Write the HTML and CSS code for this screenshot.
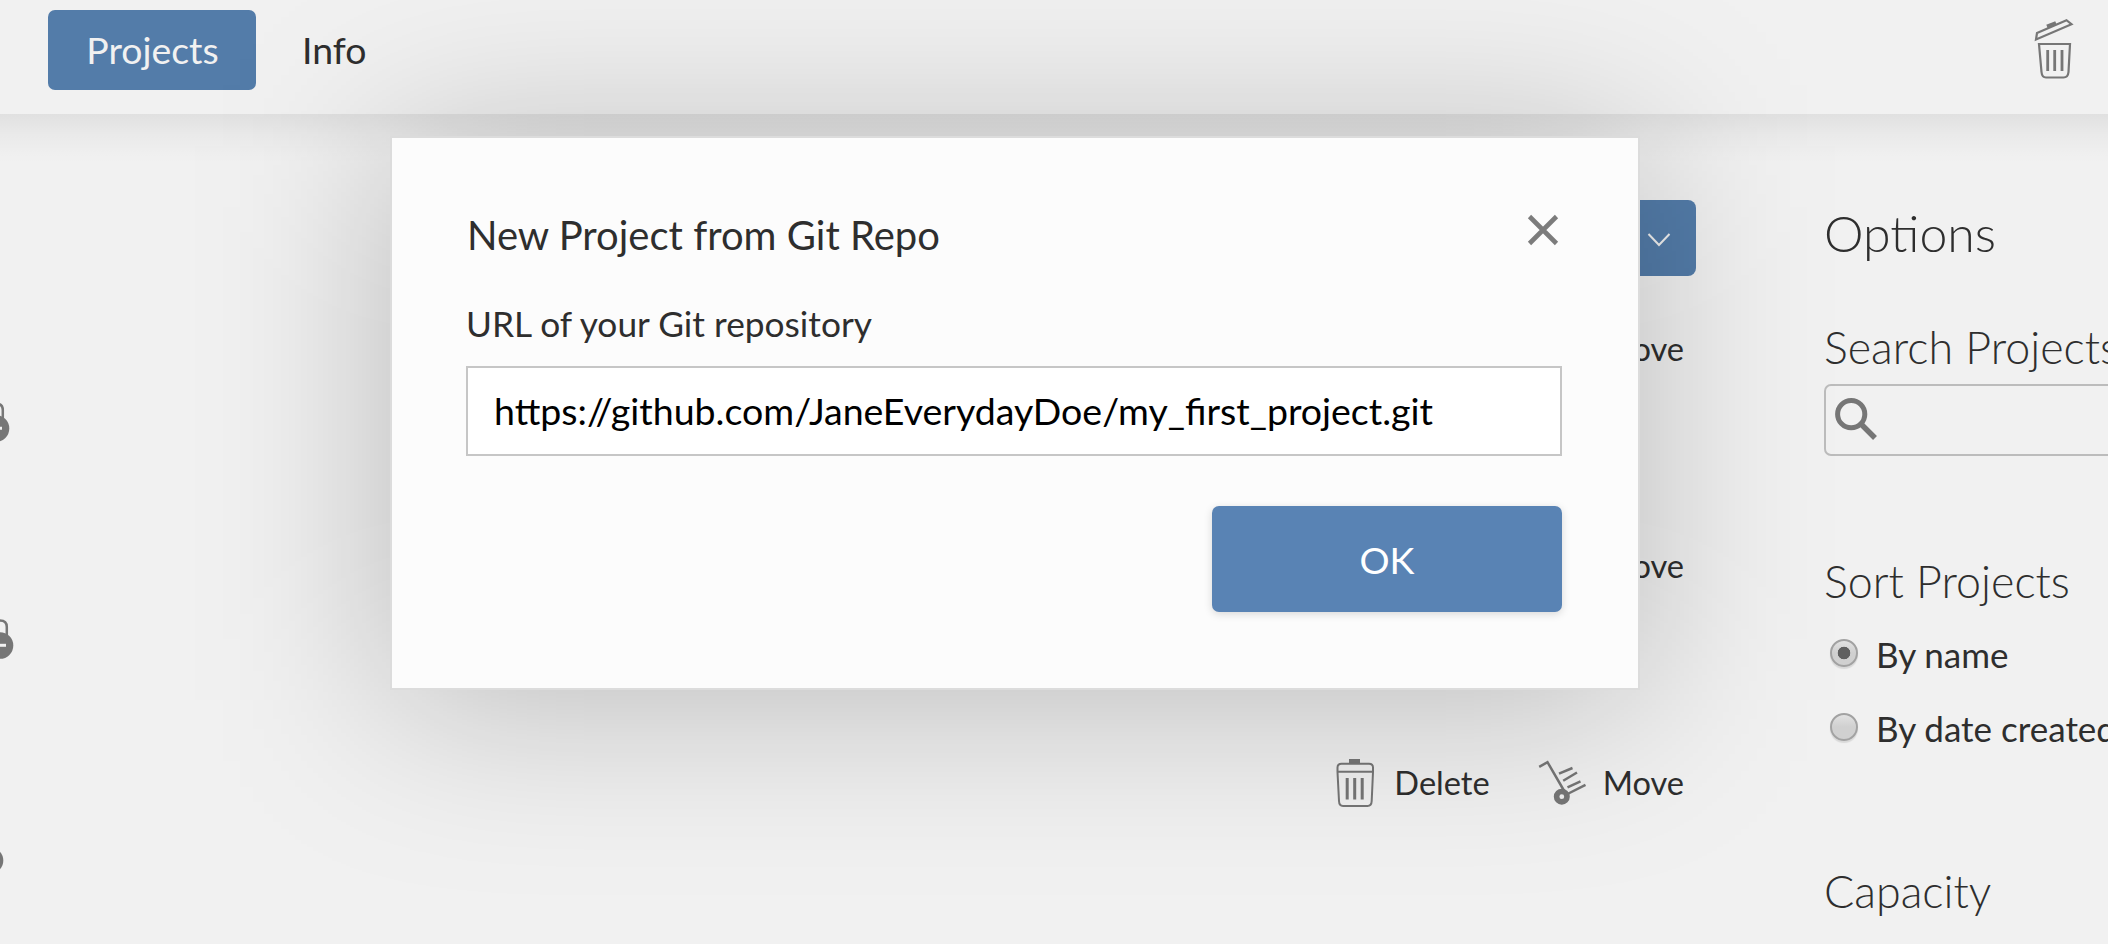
FILE: index.html
```html
<!DOCTYPE html>
<html lang="en">
<head>
<meta charset="utf-8">
<title>Projects</title>
<link rel="stylesheet" href="styles.css">
</head>
<body>
<header class="topbar">
  <nav class="tabs">
    <a class="tab tab-active">Projects</a>
    <a class="tab">Info</a>
  </nav>
  <svg class="topbar-trash" width="40" height="62" viewBox="0 0 40 62" fill="none" stroke="#767676" stroke-width="2.2">
    <path d="M2 22.500 3 16 32.500 3.200 37.500 7.200Z"/>
    <path d="M13 9.500 22 6" stroke-width="4"/>
    <path d="M5 27H36L34.500 55Q34 60.500 29.500 60.500H12Q8 60.500 7.500 55Z"/>
    <path d="M13.700 33V54M20.700 33V54M28 33V54" stroke-width="2.800"/>
  </svg>
</header>
<main class="page">
  <section class="list">
    <div class="toolbar">
      <button class="menu-button" aria-label="More">
        <svg width="24" height="16" viewBox="0 0 24 16" fill="none" stroke="#f1f1f1" stroke-width="2"><path d="M1.500 2 12 13 22.500 2"/></svg>
      </button>
    </div>
    <div class="row">
      <svg class="lock lock-a" width="28" height="42" viewBox="0 0 28 42"><path d="M7.200 20V9Q7.200 2.500 14 2.500T20.800 9V20" fill="none" stroke="#767676" stroke-width="2.500"/><circle cx="14" cy="27.500" r="13.300" fill="#767676"/><path d="M8 27.300H20" stroke="#f1f1f1" stroke-width="3"/></svg>
      <div class="actions"><span class="action">Move</span></div>
    </div>
    <div class="row">
      <svg class="lock lock-b" width="28" height="42" viewBox="0 0 28 42"><path d="M7.200 20V9Q7.200 2.500 14 2.500T20.800 9V20" fill="none" stroke="#767676" stroke-width="2.500"/><circle cx="14" cy="27.500" r="13.300" fill="#767676"/><path d="M8 27.300H20" stroke="#f1f1f1" stroke-width="3"/></svg>
      <div class="actions"><span class="action">Move</span></div>
    </div>
    <div class="row">
      <svg class="lock lock-c" width="28" height="42" viewBox="0 0 28 42"><path d="M7.200 20V9Q7.200 2.500 14 2.500T20.800 9V20" fill="none" stroke="#767676" stroke-width="2.500"/><circle cx="14" cy="27.500" r="13.300" fill="#767676"/></svg>
      <div class="actions">
        <span class="action">
          <svg class="icon-delete" width="40" height="50" viewBox="0 0 40 50" fill="none" stroke="#767676" stroke-width="2">
            <path d="M13 1H24V5.500H13Z" fill="#767676" stroke="none"/>
            <path d="M1.500 14V9.500Q1.500 5.800 5.500 5.800H33Q37 5.800 37 9.500V14"/>
            <path d="M1.500 13.800H37"/>
            <path d="M1.500 14 3 43Q3.200 48 7 48H31.500Q35.500 48 35.700 43L37 14"/>
            <path d="M11.200 20V41.500M18.700 20V41.500M26.200 20V41.500" stroke-width="3"/>
          </svg>
          Delete
        </span>
        <span class="action">
          <svg class="icon-move" width="50" height="46" viewBox="0 0 50 46" fill="none" stroke="#767676" stroke-width="2.500">
            <path d="M1.200 6.800 9.500 2.200 26.500 31.500"/>
            <path d="M21 13.700 34.500 8M25.200 20.800 39 12.500M29.500 27.300 42.500 21.300M29.500 34 47.500 24.800"/>
            <circle cx="23.800" cy="36.700" r="5.200" stroke-width="5.600"/>
          </svg>
          Move
        </span>
      </div>
    </div>
  </section>
  <aside class="options">
    <h2 class="options-title">Options</h2>
    <h3 class="group-title search-title">Search Projects</h3>
    <div class="search-box">
      <svg width="44" height="44" viewBox="0 0 44 44" fill="none" stroke="#767676"><circle cx="16.200" cy="17.200" r="13.600" stroke-width="5"/><path d="M26 27 40 41" stroke-width="5.500"/></svg>
    </div>
    <h3 class="group-title sort-title">Sort Projects</h3>
    <div class="choice"><i class="radio radio-on"></i><span>By name</span></div>
    <div class="choice"><i class="radio"></i><span>By date created</span></div>
    <h3 class="group-title capacity-title">Capacity</h3>
  </aside>
</main>
<div class="dialog-shade"></div>
<div class="dialog" role="dialog">
  <div class="dialog-head">
    <h1 class="dialog-title">New Project from Git Repo</h1>
    <svg class="close" width="32" height="32" viewBox="0 0 32 32" fill="none" stroke="#7c7c7c" stroke-width="4.600"><path d="M2.500 2.500 29.500 29.500M29.500 2.500 2.500 29.500"/></svg>
  </div>
  <div class="dialog-label">URL of your Git repository</div>
  <div class="url-field"><span class="url-text">https://github.com/JaneEverydayDoe/my_first_project.git</span></div>
  <button class="ok">OK</button>
</div>
</body>
</html>
```
FILE: styles.css
```css
* { box-sizing: border-box; }
body {
  margin: 0;
  width: 2108px;
  height: 944px;
  overflow: hidden;
  position: relative;
  background: #f1f1f1;
  color: #2e2e2e;
  font-family: Lato, sans-serif;
}
h1, h2, h3 { margin: 0; font-weight: 400; }
svg { display: block; flex: none; }
button { border: 0; font-family: inherit; }
.topbar {
  position: relative;
  height: 114px;
  padding: 10px 34px 0 48px;
  display: flex;
  justify-content: space-between;
  align-items: flex-start;
  background: #f1f1f1;
}
.topbar::after {
  content: "";
  position: absolute;
  left: 0;
  right: 0;
  top: 100%;
  height: 50px;
  background: linear-gradient(rgba(0, 0, 0, .07), rgba(0, 0, 0, .032) 40%, rgba(0, 0, 0, .006) 80%, transparent);
}
.tabs { display: flex; }
.tab {
  height: 80px;
  line-height: 79px;
  padding: 0 46px;
  font-size: 37.4px;
  white-space: nowrap;
}
.tab-active {
  width: 208px;
  padding: 0 0 0 1px;
  text-align: center;
  border-radius: 7px;
  background: #537ca9;
  color: #f1f1f1;
}
.topbar-trash { margin-top: 7px; }
.page { display: flex; }
.list { width: 1696px; padding-top: 86px; flex: none; }
.toolbar { display: flex; justify-content: flex-end; }
.menu-button {
  width: 300px;
  height: 76px;
  padding: 3px 25px 0 0;
  display: flex;
  align-items: center;
  justify-content: flex-end;
  border-radius: 8px;
  background: #537ca9;
}
.row {
  height: 217px;
  display: flex;
  justify-content: space-between;
  align-items: flex-start;
}
.row:nth-child(2) { margin-top: 24px; }
.lock { margin-top: 100.5px; }
.lock-a { margin-left: -18.5px; }
.lock-b { margin-left: -14px; }
.lock-c { margin-top: 98.5px; margin-left: -24px; }
.actions {
  display: flex;
  gap: 48px;
  padding: 25px 12px 0 0;
}
.action {
  display: flex;
  align-items: center;
  gap: 14px;
  height: 48px;
  font-size: 32.6px;
  line-height: 48px;
}
.icon-delete { margin-right: 4px; margin-left: -4px; }
.icon-move { margin-right: 1px; }
.options {
  margin-left: 128px;
  width: 284px;
  height: 830px;
  padding-top: 89px;
  overflow: hidden;
  white-space: nowrap;
}
.options-title { font-size: 50px; line-height: 60px; font-weight: 300; }
.group-title { font-size: 44.8px; line-height: 52px; font-weight: 300; }
.search-title { margin-top: 58px; }
.search-box {
  width: 420px;
  height: 72px;
  margin-top: 11px;
  padding: 11px 9px;
  border: 2px solid #bcbcbc;
  border-radius: 7px;
}
.sort-title { margin-top: 99px; margin-bottom: 26px; }
.choice {
  display: flex;
  align-items: center;
  gap: 18px;
  height: 42px;
  padding-left: 6px;
  margin-bottom: 32px;
  font-size: 35px;
  line-height: 42px;
}
.radio {
  width: 28px;
  height: 28px;
  margin-top: -2px;
  flex: none;
  border: 2px solid #a2a2a2;
  border-radius: 50%;
  background: linear-gradient(#e2e2e2, #d0d0d0 50%);
  box-shadow: 0 2px 1px rgba(0, 0, 0, .1);
}
.radio-on { background: radial-gradient(circle, #606060 6px, transparent 6.6px), linear-gradient(#e2e2e2, #d0d0d0 50%); }
.capacity-title { margin-top: 116px; }
.dialog-shade {
  position: absolute;
  left: 390px;
  top: 146px;
  width: 1250px;
  height: 554px;
  background: rgba(0, 0, 0, .23);
  filter: blur(92px);
}
.dialog {
  position: absolute;
  left: 390px;
  top: 136px;
  width: 1250px;
  height: 554px;
  padding: 72px 76px 0 74px;
  display: flex;
  flex-direction: column;
  background: #fcfcfc;
  background-clip: padding-box;
  border: 2px solid #dcdcdc;
}
.dialog-head { display: flex; justify-content: space-between; height: 48px; }
.dialog-title { font-size: 40px; line-height: 50px; padding-left: 1px; }
.close { margin: 4px 3px 0 0; }
.dialog-label { margin-top: 44px; font-size: 35.3px; line-height: 44px; }
.url-field {
  height: 90px;
  margin-top: 20px;
  padding-left: 26px;
  background: #fff;
  border: 2px solid #c6c6c6;
  color: #000;
  font-size: 37.5px;
  line-height: 86px;
}
.ok {
  align-self: flex-end;
  width: 350px;
  height: 106px;
  margin-top: 50px;
  border-radius: 7px;
  background: #5983b4;
  color: #fff;
  font-size: 37.6px;
  box-shadow: 0 2px 8px rgba(0, 0, 0, .15);
}
```
